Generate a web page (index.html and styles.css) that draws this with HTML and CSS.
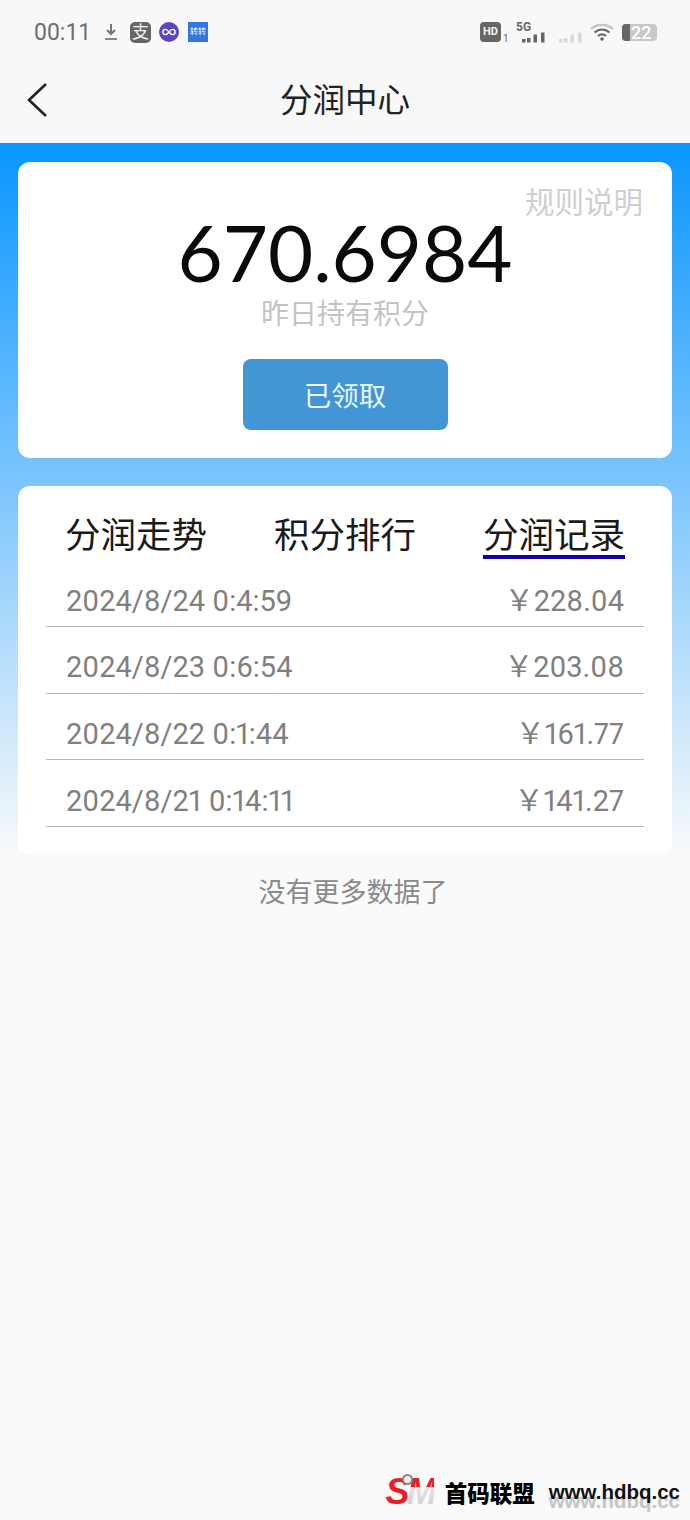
FILE: index.html
```html
<!DOCTYPE html>
<html lang="zh-CN">
<head>
  <meta charset="UTF-8">
  <meta name="viewport" content="width=device-width, initial-scale=1">
  <title>分润中心</title>
  <link rel="stylesheet" href="styles.css">
</head>
<body>
  <div class="page">
    <div class="topbar">
      <!-- Status bar -->
      <div class="status-bar">
        <div class="status-left">
          <span class="status-time">00:11</span>
          <svg class="ic-download" width="14" height="18" viewBox="0 0 14 18">
            <path d="M7 1v9M3 7l4 4 4-4" fill="none" stroke="#777" stroke-width="2"/>
            <path d="M1 16h12" stroke="#888" stroke-width="2"/>
          </svg>
          <span class="ic-alipay">支</span>
          <svg class="ic-loop" width="20" height="20" viewBox="0 0 20 20">
            <circle cx="10" cy="10" r="10" fill="#5f45c4"/>
            <path d="M10 10c-1.500-2-2.200-2.600-3.500-2.600a2.600 2.600 0 0 0 0 5.200c1.300 0 2-.6 3.500-2.600s2.200-2.600 3.500-2.600a2.600 2.600 0 0 1 0 5.200c-1.300 0-2-.6-3.500-2.600z" fill="none" stroke="#fff" stroke-width="1.400"/>
          </svg>
          <span class="ic-blue">转转</span>
        </div>
        <div class="status-right">
          <span class="ic-hd">HD</span><span class="hd-sub">1</span>
          <div class="signal-5g">
            <span class="label-5g">5G</span>
            <svg width="24" height="11" viewBox="0 0 24 11">
              <rect x="0" y="7" width="3.500" height="3.500" fill="#666"/>
              <rect x="5" y="6" width="3.500" height="4.500" fill="#666"/>
              <rect x="11.500" y="2.500" width="3.500" height="8" fill="#666"/>
              <rect x="19" y="0.500" width="3.500" height="10" fill="#666"/>
            </svg>
          </div>
          <svg class="signal-off" width="24" height="11" viewBox="0 0 24 11">
            <rect x="0" y="7" width="3.500" height="3.500" fill="#d8d8d8"/>
            <rect x="5" y="6" width="3.500" height="4.500" fill="#d8d8d8"/>
            <rect x="11.500" y="2.500" width="3.500" height="8" fill="#d8d8d8"/>
            <rect x="19" y="0.500" width="3.500" height="10" fill="#d8d8d8"/>
          </svg>
          <svg class="ic-wifi" width="24" height="20" viewBox="0 0 24 20">
            <path d="M1 7c6-5.500 16-5.500 22 0" fill="none" stroke="#c4c4c4" stroke-width="2.200"/>
            <path d="M4.500 10.500c4.500-4 10.500-4 15 0" fill="none" stroke="#666" stroke-width="2.200"/>
            <path d="M8 14c2.500-2 5.500-2 8 0" fill="none" stroke="#666" stroke-width="2.200"/>
            <circle cx="12" cy="17" r="1.800" fill="#666"/>
          </svg>
          <div class="battery">
            <span class="battery-fill"></span>
            <span class="battery-num">22</span>
          </div>
        </div>
      </div>
      <!-- Title bar -->
      <div class="nav-bar">
        <svg class="back-icon" width="22" height="36" viewBox="0 0 22 36">
          <path d="M20 2 3 18l17 16" fill="none" stroke="#222" stroke-width="2.600"/>
        </svg>
        <div class="nav-title">分润中心</div>
      </div>
    </div>

    <div class="main">
      <!-- Points card -->
      <div class="card points-card">
        <span class="rule-link">规则说明</span>
        <div class="points-value">670.6984</div>
        <div class="points-label">昨日持有积分</div>
        <button class="claim-btn">已领取</button>
      </div>

      <!-- Records card -->
      <div class="card records-card">
        <div class="tabs">
          <div class="tab">分润走势</div>
          <div class="tab">积分排行</div>
          <div class="tab active">分润记录</div>
        </div>
        <div class="record-row"><span>2024/8/24 0:4:59</span><span>￥228.04</span></div>
        <div class="record-row"><span>2024/8/23 0:6:54</span><span>￥203.08</span></div>
        <div class="record-row"><span>2024/8/22 0:1:44</span><span>￥161.77</span></div>
        <div class="record-row"><span>2024/8/21 0:14:11</span><span>￥141.27</span></div>
      </div>

      <div class="no-more">没有更多数据了</div>
    </div>

    <!-- Site watermark -->
    <div class="watermark">
      <span class="wm-logo"><span class="wm-s">S</span><span class="wm-m">M</span></span>
      <span class="wm-name">首码联盟</span>
      <span class="wm-url">www.hdbq.cc</span>
    </div>
  </div>
</body>
</html>
```

FILE: styles.css
```css
* {
  margin: 0;
  padding: 0;
  box-sizing: border-box;
}

body {
  font-family: Roboto, "Noto Sans CJK SC", sans-serif;
  background: #fafafa;
}

.page {
  position: relative;
  width: 690px;
  height: 1520px;
  overflow: hidden;
}

/* Top area */
.topbar {
  height: 143px;
  background: #f8f8f8;
}

.status-bar {
  height: 62px;
  padding: 2px 33px 0 34px;
  display: flex;
  justify-content: space-between;
  align-items: center;
}

.status-left,
.status-right {
  display: flex;
  align-items: center;
}

.status-time {
  font-size: 23px;
  color: #6e6e6e;
  width: 70px;
}

.ic-alipay {
  width: 21px;
  height: 21px;
  margin-left: 12px;
  border-radius: 5px;
  background: #666;
  color: #f4f4f4;
  font-size: 17px;
  line-height: 21px;
  text-align: center;
}

.ic-loop {
  margin-left: 8px;
}

.ic-blue {
  width: 20px;
  height: 20px;
  margin-left: 9px;
  background: #3577dc;
  color: #fff;
  font-size: 8px;
  line-height: 20px;
  text-align: center;
}

.ic-hd {
  width: 21px;
  height: 20px;
  border-radius: 4px;
  background: #666;
  color: #f4f4f4;
  font-size: 11px;
  font-weight: 700;
  line-height: 20px;
  text-align: center;
}

.hd-sub {
  width: 6px;
  margin-top: 13px;
  margin-left: 2px;
  font-size: 10px;
  color: #666;
}

.signal-5g {
  margin-left: 7px;
  width: 30px;
  display: flex;
  flex-direction: column;
}

.label-5g {
  font-size: 12px;
  font-weight: 700;
  line-height: 10px;
  color: #666;
}

.signal-5g svg {
  margin-top: 0;
  margin-left: 6px;
}

.signal-off {
  margin-left: 13px;
  margin-top: 11px;
}

.ic-wifi {
  margin-left: 7px;
}

.battery {
  position: relative;
  width: 35px;
  height: 17px;
  margin-left: 8px;
  border-radius: 4px;
  background: #c8c8c8;
}

.battery-fill {
  display: block;
  width: 8px;
  height: 17px;
  border-radius: 4px 0 0 4px;
  background: #666;
}

.battery-num {
  position: absolute;
  top: 0;
  left: 9px;
  font-size: 18px;
  font-weight: 500;
  line-height: 17px;
  color: #fff;
}

.nav-bar {
  position: relative;
  height: 76px;
  padding-bottom: 6px;
  display: flex;
  align-items: center;
  justify-content: center;
}

.back-icon {
  position: absolute;
  left: 26px;
  top: 20px;
}

.nav-title {
  font-size: 32.500px;
  color: #222;
}

/* Gradient area */
.main {
  height: 760px;
  padding: 19px 18px 0;
  background: linear-gradient(180deg, #0996ff 0%, #fafafa 94%);
}

.card {
  background: #fff;
  border-radius: 12px;
}

.points-card {
  position: relative;
  height: 296px;
  padding-top: 48px;
  display: flex;
  flex-direction: column;
  align-items: center;
}

.rule-link {
  position: absolute;
  top: 17px;
  right: 29px;
  font-size: 29.500px;
  color: #cfcfcf;
}

.points-value {
  font-family: Lato, sans-serif;
  font-size: 78px;
  line-height: 84px;
  color: #0a0a0a;
}

.points-label {
  margin-top: 3px;
  font-size: 28px;
  line-height: 36px;
  color: #c4c4c4;
}

.claim-btn {
  width: 205px;
  height: 71px;
  margin-top: 26px;
  padding-bottom: 2px;
  border: none;
  border-radius: 8px;
  background: #4296d6;
  color: #e8f6fa;
  font-family: inherit;
  font-size: 27.500px;
}

.records-card {
  height: 369px;
  margin-top: 28px;
  padding: 0 28px;
}

.tabs {
  height: 74.300px;
  padding: 0 19px 0 19px;
  display: flex;
  justify-content: space-between;
  align-items: flex-start;
}

.tab {
  height: 73px;
  padding-top: 26px;
  font-size: 35.500px;
  line-height: 48px;
  color: #1a1a1a;
}

.tab.active {
  position: relative;
}

.tab.active:after {
  content: "";
  position: absolute;
  left: 0;
  right: 0;
  top: 69px;
  height: 4px;
  background: #1500b0;
}

.record-row {
  height: 66.700px;
  padding: 15px 20px 0;
  display: flex;
  justify-content: space-between;
  align-items: center;
  border-bottom: 1px solid #b8b8b8;
  font-size: 29px;
  line-height: 40px;
  font-variant-numeric: proportional-nums;
  color: #808080;
}

.no-more {
  margin-top: 18px;
  padding-left: 16px;
  text-align: center;
  font-size: 27px;
  line-height: 40px;
  color: #8a8a8a;
}

/* Watermark lies over the page */
.watermark {
  position: absolute;
  right: 10px;
  bottom: 12px;
  display: flex;
  align-items: center;
}

.wm-logo {
  position: relative;
  font-family: "Liberation Sans", sans-serif;
  font-size: 36px;
  font-style: italic;
  font-weight: 700;
  line-height: 32px;
  letter-spacing: -3px;
}

.wm-logo:before {
  content: "";
  position: absolute;
  left: 16px;
  top: -2px;
  width: 7px;
  height: 7px;
  border: 2px solid #888;
  border-radius: 50%;
  background: #eee;
}

.wm-s {
  color: #ee1c24;
}

.wm-m {
  background: linear-gradient(180deg, #ee1c24 0%, #ee1c24 38%, #e4e4e4 39%, #ccc 100%);
  -webkit-background-clip: text;
  -webkit-text-fill-color: transparent;
}

.wm-name {
  margin-left: 11px;
  font-family: "Noto Sans CJK SC", sans-serif;
  font-size: 22.500px;
  font-weight: 900;
  color: #000;
}

.wm-url {
  margin-left: 14px;
  font-family: "Liberation Sans", sans-serif;
  font-size: 20.500px;
  font-weight: 700;
  color: #111;
  text-shadow: 0 9px 1px #c0c0c0;
}
```
